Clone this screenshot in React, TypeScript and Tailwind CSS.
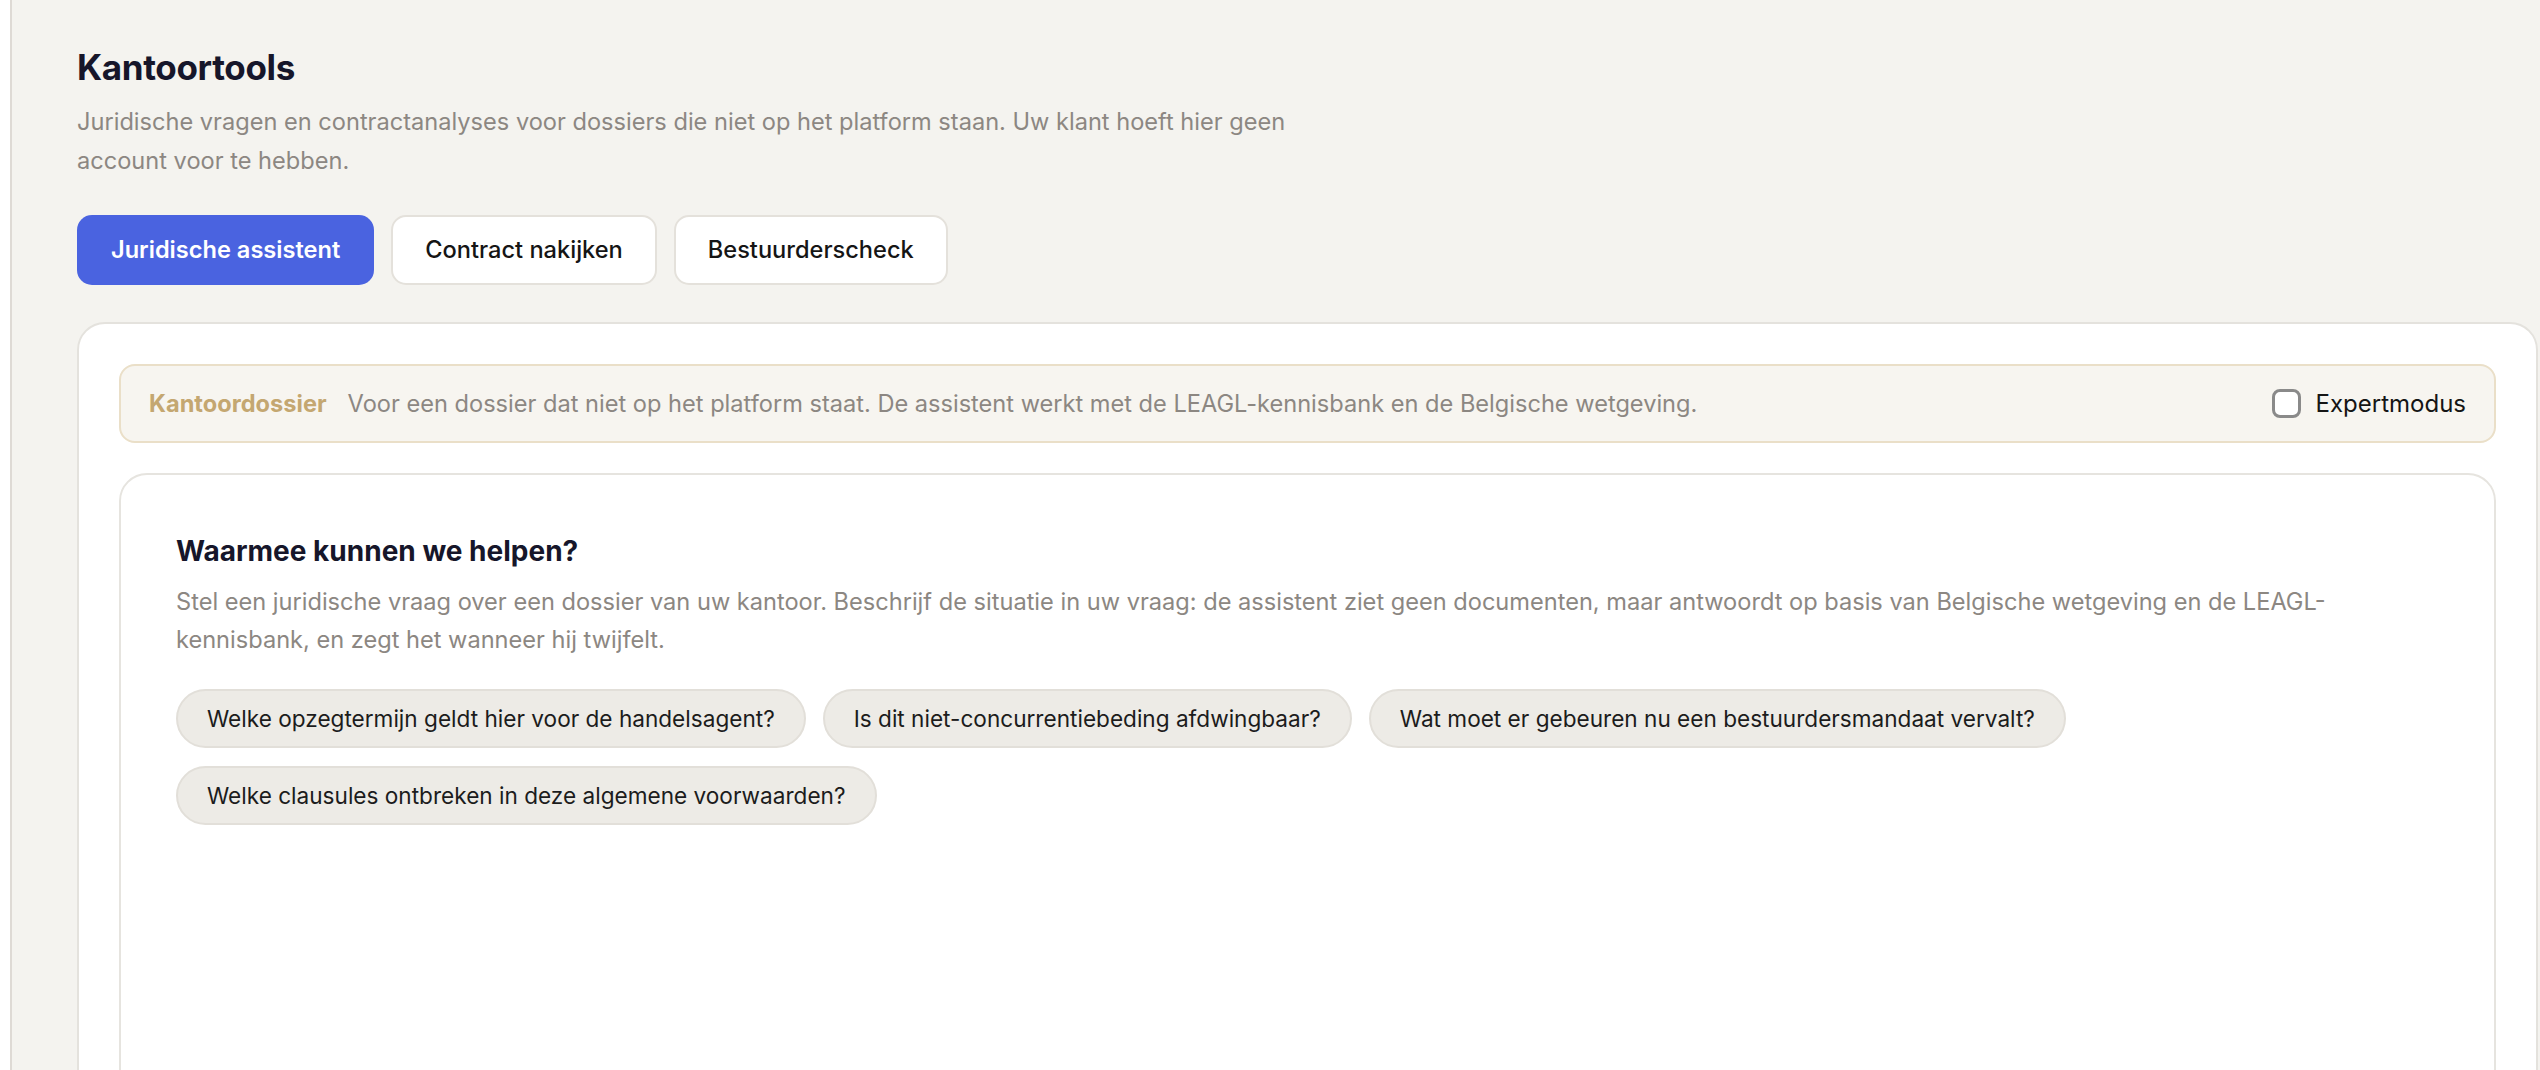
import React from 'react';

const FONT = { fontFamily: 'Inter, "Noto Sans", sans-serif' };

const suggestions = [
  'Welke opzegtermijn geldt hier voor de handelsagent?',
  'Is dit niet-concurrentiebeding afdwingbaar?',
  'Wat moet er gebeuren nu een bestuurdersmandaat vervalt?',
  'Welke clausules ontbreken in deze algemene voorwaarden?',
];

const tabs = ['Juridische assistent', 'Contract nakijken', 'Bestuurderscheck'];

export default function App() {
  const active = 0;

  return (
    <div className="flex h-[1070px] w-[2540px] overflow-hidden bg-[#f4f3ef]" style={FONT}>
      {/* sidebar edge */}
      <div className="w-[12px] shrink-0 border-r-2 border-[#dedad5] bg-white" />

      <main className="min-w-0 flex-1 pl-[65px] pr-[2px] pt-[46px]">
        {/* Header */}
        <h1 className="text-[35px] font-bold leading-[42px] tracking-[-0.01em] text-[#16162a]">Kantoortools</h1>
        <p className="mt-[14px] max-w-[1250px] text-[23.6px] leading-[39px] text-[#8c8782]">
          Juridische vragen en contractanalyses voor dossiers die niet op het platform staan. Uw klant hoeft hier geen
          account voor te hebben.
        </p>

        {/* Tabs */}
        <div className="mt-[35px] flex gap-[17px]">
          {tabs.map((t, i) => (
            <button
              key={t}
              className={
                i === active
                  ? 'h-[70px] rounded-[15px] bg-[#4a63e0] px-[34px] text-[23.6px] font-semibold text-white'
                  : 'h-[70px] rounded-[15px] border-2 border-[#e4e1db] bg-white px-[32px] text-[23.6px] font-medium text-[#151515]'
              }
            >
              {t}
            </button>
          ))}
        </div>

        {/* Card */}
        <section className="mt-[37px] rounded-[28px] border-2 border-[#e4e2dd] bg-white p-[40px]">
          {/* Kantoordossier banner */}
          <div className="flex h-[79px] items-center rounded-[16px] border-2 border-[#eadfc8] bg-[#f7f5f0] px-[28px]">
            <span className="text-[23.6px] font-bold text-[#c4a771]">Kantoordossier</span>
            <span className="ml-[21px] text-[23.6px] text-[#8c8782]">
              Voor een dossier dat niet op het platform staat. De assistent werkt met de LEAGL-kennisbank en de Belgische
              wetgeving.
            </span>
            <label className="ml-auto flex items-center gap-[15px]">
              <span className="block h-[29px] w-[29px] rounded-[8px] border-[3px] border-[#8a8a8a] bg-white" />
              <span className="text-[24px] text-[#151515]">Expertmodus</span>
            </label>
          </div>

          {/* Assistant panel */}
          <div className="mt-[30px] h-[700px] rounded-[28px] border-2 border-[#e6e4df] bg-white px-[55px] pt-[58px]">
            <h2 className="text-[28px] font-bold leading-[36px] text-[#16162a]">Waarmee kunnen we helpen?</h2>
            <p className="mt-[14px] max-w-[2200px] text-[23.6px] leading-[38px] text-[#8c8782]">
              Stel een juridische vraag over een dossier van uw kantoor. Beschrijf de situatie in uw vraag: de assistent
              ziet geen documenten, maar antwoordt op basis van Belgische wetgeving en de LEAGL-kennisbank, en zegt het
              wanneer hij twijfelt.
            </p>
            <div className="mt-[30px] flex flex-wrap gap-x-[17px] gap-y-[18px]">
              {suggestions.map((s) => (
                <button
                  key={s}
                  className="h-[59px] rounded-full border-2 border-[#e2dfd9] bg-[#edebe6] px-[29px] text-[22.6px] text-[#1c1c1c]"
                >
                  {s}
                </button>
              ))}
            </div>
          </div>
        </section>
      </main>
    </div>
  );
}
